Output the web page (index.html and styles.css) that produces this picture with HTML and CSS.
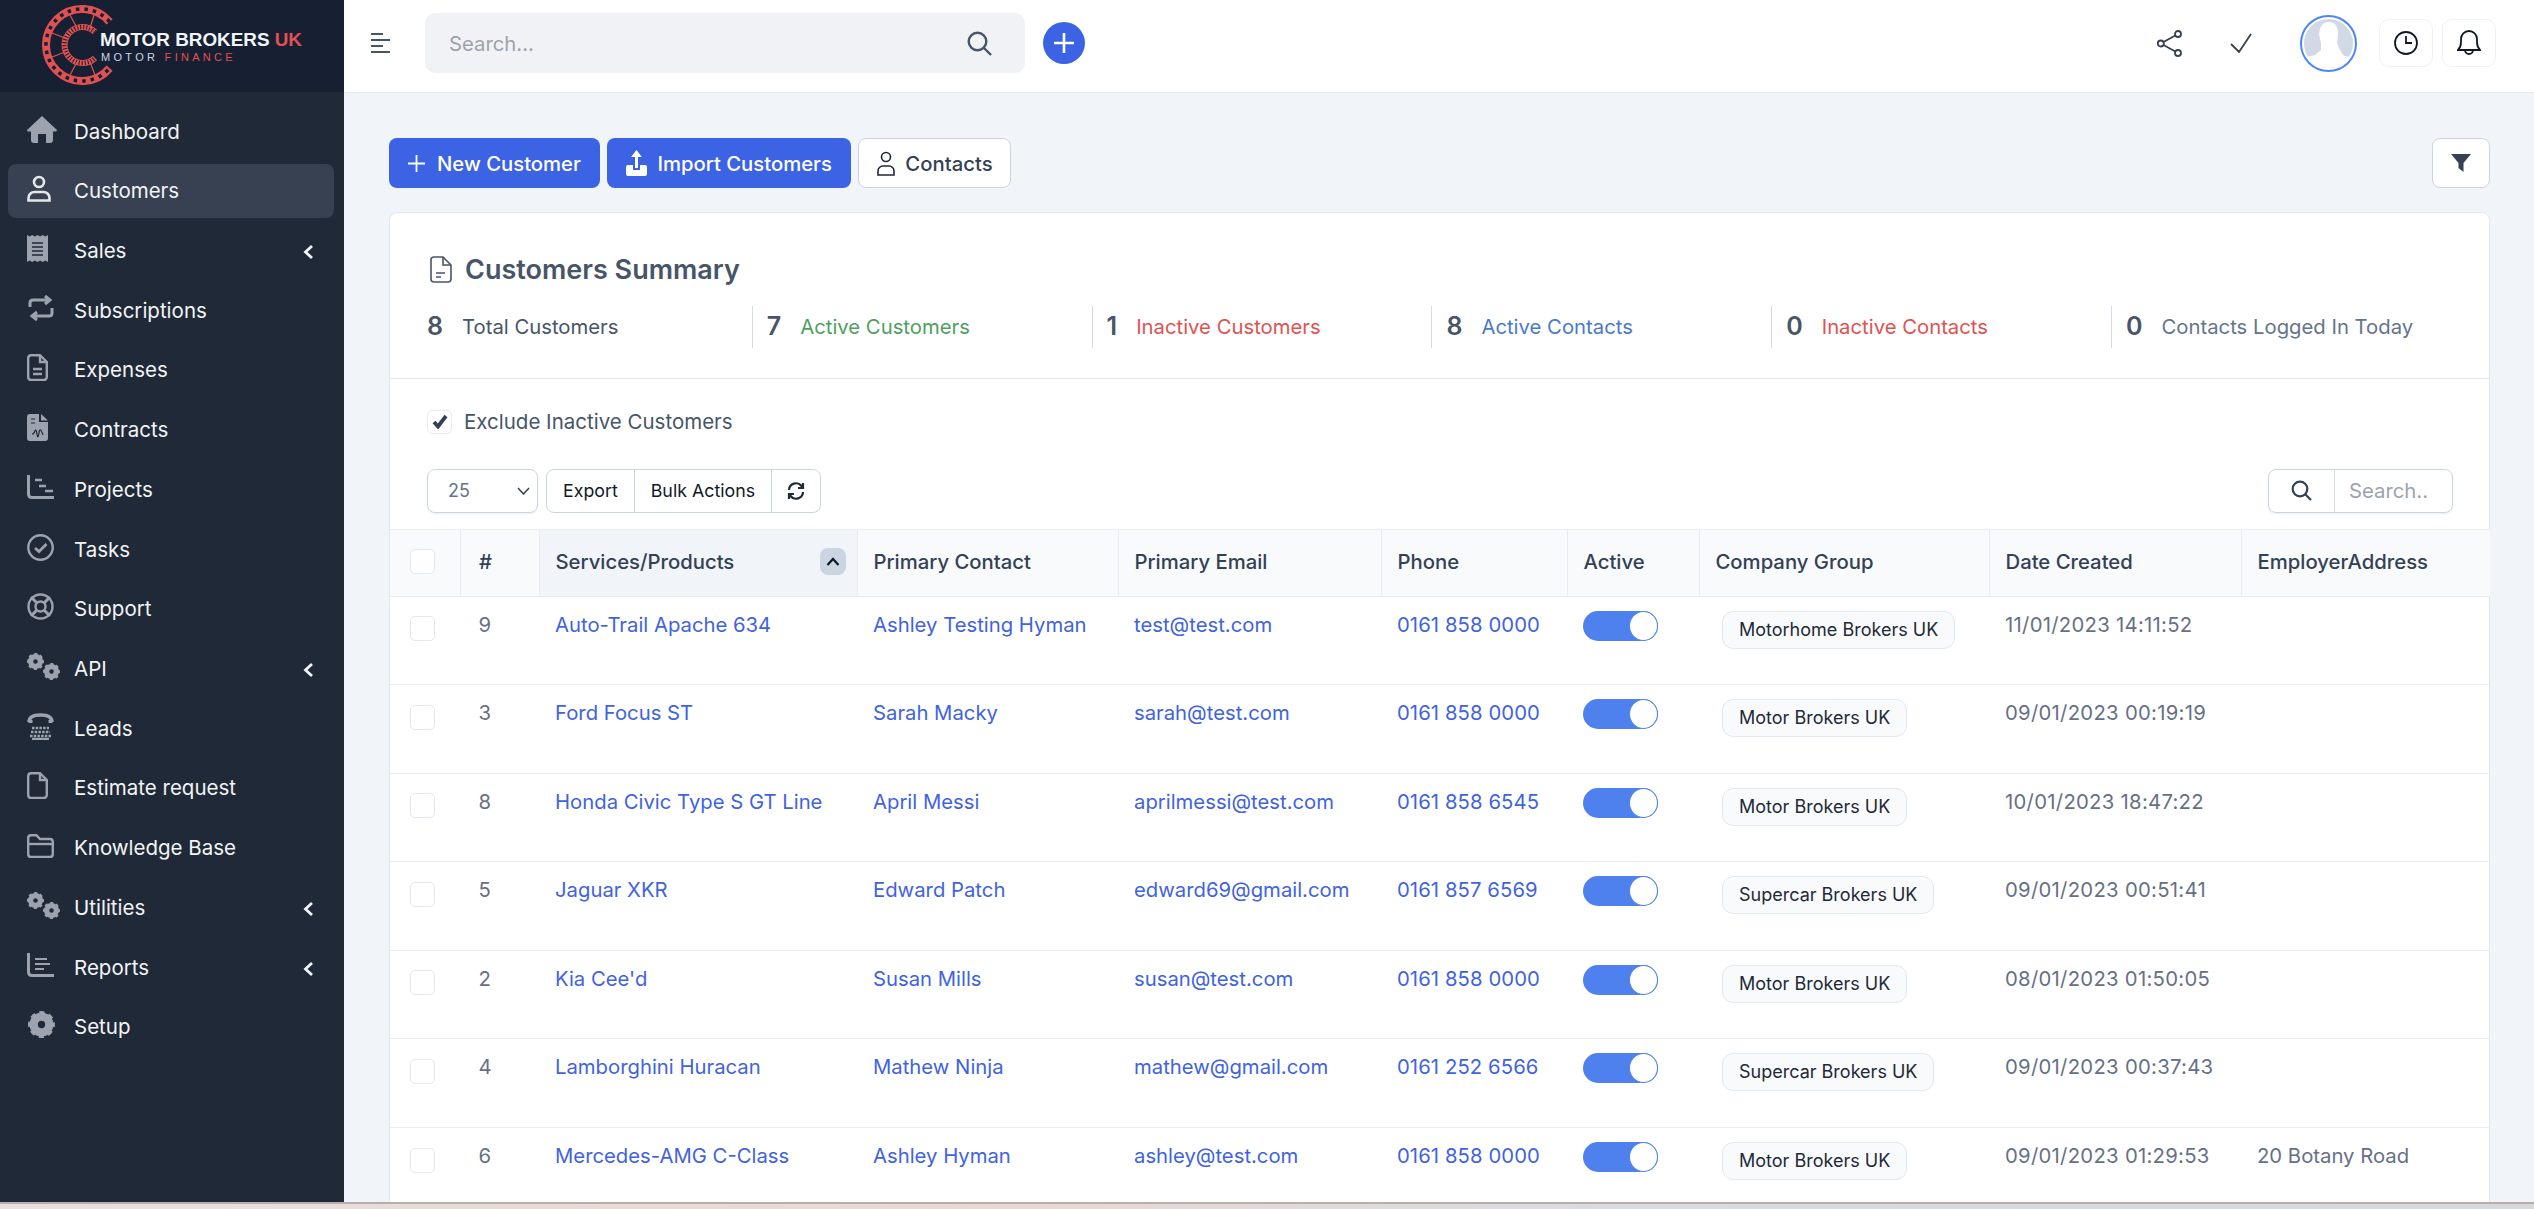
FILE: index.html
```html
<!DOCTYPE html>
<html lang="en">
<head>
<meta charset="utf-8">
<title>Customers</title>
<link rel="stylesheet" href="styles.css">
</head>
<body>
<svg class="sprite" aria-hidden="true">
  <symbol id="cog" viewBox="0 0 26 26">
    <circle cx="13" cy="13" r="7.500" fill="none" stroke="currentColor" stroke-width="8"/>
    <circle cx="13" cy="13" r="11" fill="none" stroke="currentColor" stroke-width="4" stroke-dasharray="4.640 4" stroke-dashoffset="2.300"/>
  </symbol>
</svg>
<div class="app">
  <aside class="sidebar">
    <div class="brand">
      <svg class="logo" width="344" height="92" viewBox="0 0 344 92">
        <g fill="none" stroke="#e05252" transform="translate(2 0)">
          <path d="M107.6 21.9A36 36 0 1 0 107.6 68.1" stroke-width="8"/>
          <path d="M107.6 21.9A36 36 0 1 0 107.6 68.1" stroke-width="3.500" stroke="#171f32" stroke-dasharray="3.500 5"/>
          <path d="M93 32A18 18 0 1 0 93 58" stroke-width="6"/>
          <path d="M93 32A18 18 0 1 0 93 58" stroke-width="4.500" stroke="#171f32" stroke-dasharray="1 2"/>
          <path d="M68 15L75 28M92 15L88 28M50 33L63 38M50 57L63 52M75 62L68 75M88 62L93 75" stroke-width="1.200"/>
        </g>
        <text class="logo-main" x="100" y="46" textLength="202" lengthAdjust="spacingAndGlyphs">MOTOR BROKERS <tspan class="logo-red">UK</tspan></text>
        <text class="logo-sub" x="101" y="61">MOTOR <tspan class="logo-red">FINANCE</tspan></text>
      </svg>
    </div>
    <nav class="menu">
      <a class="item"><span class="ico"><svg width="30" height="27" viewBox="0 0 30 27"><path fill="currentColor" d="M15 0L30 14Q30 15.500 28 15.500H26V24Q26 27 23 27H19V18H11V27H7Q4 27 4 24V15.500H2Q0 15.500 0 14Z"/></svg></span><span class="lbl">Dashboard</span></a>
      <a class="item active"><span class="ico"><svg width="24" height="27" viewBox="0 0 24 27" fill="none" stroke="currentColor" stroke-width="2.600"><circle cx="12" cy="7" r="5"/><path d="M1.500 25.500V23A6 6 0 0 1 7.500 17H16.500A6 6 0 0 1 22.500 23V25.500Z"/></svg></span><span class="lbl">Customers</span></a>
      <a class="item"><span class="ico"><svg width="21" height="27" viewBox="0 0 21 27"><path fill="currentColor" d="M0 0L2.600 1.500 5.200 0 7.800 1.500 10.500 0 13.100 1.500 15.700 0 18.300 1.500 21 0V27L18.300 25.500 15.700 27 13.100 25.500 10.500 27 7.800 25.500 5.200 27 2.600 25.500 0 27Z"/><path stroke="#1f2937" stroke-width="1.500" d="M5 8H16M5 12H16M5 16H16M5 20H16"/></svg></span><span class="lbl">Sales</span><svg class="chev" width="11" height="16" viewBox="0 0 11 16"><path d="M9 2L2.500 8 9 14" fill="none" stroke="currentColor" stroke-width="2.800"/></svg></a>
      <a class="item"><span class="ico"><svg width="28" height="26" viewBox="0 0 28 26" fill="none" stroke="currentColor" stroke-width="3"><path d="M3 12V8Q3 5 6 5H22M18 1L23 5 18 9"/><path d="M25 13V18Q25 21 22 21H6M10 17L5 21 10 25"/></svg></span><span class="lbl">Subscriptions</span></a>
      <a class="item"><span class="ico"><svg width="21" height="27" viewBox="0 0 21 27" fill="none" stroke="currentColor" stroke-width="2.400"><path d="M4 1.200H13L19.800 8V23A3 3 0 0 1 16.800 26H4A3 3 0 0 1 1.200 23V4A3 3 0 0 1 4 1.200Z"/><path d="M13 1.200V8H19.800M6 15H15M6 20H15"/></svg></span><span class="lbl">Expenses</span></a>
      <a class="item"><span class="ico"><svg width="21" height="27" viewBox="0 0 21 27"><path fill="currentColor" d="M3 0H12V8H21V24A3 3 0 0 1 18 27H3A3 3 0 0 1 0 24V3A3 3 0 0 1 3 0ZM14 0L21 6.500H14Z"/><path fill="none" stroke="#1f2937" stroke-width="1.200" d="M5 20Q7 20 8 17T10 20 12 19 16 21M4 5H8M4 9H8"/></svg></span><span class="lbl">Contracts</span></a>
      <a class="item"><span class="ico"><svg width="27" height="24" viewBox="0 0 27 24" fill="none" stroke="currentColor"><path stroke-width="3" d="M1.500 0V19Q1.500 22.500 5 22.500H27"/><path stroke-width="2.600" d="M8 5H15M12 11H19M18 16H26"/></svg></span><span class="lbl">Projects</span></a>
      <a class="item"><span class="ico"><svg width="27" height="27" viewBox="0 0 27 27" fill="none" stroke="currentColor" stroke-width="2.400"><circle cx="13.500" cy="13.500" r="12.200"/><path stroke-width="2.800" d="M8 14L12 17.500 19.500 10"/></svg></span><span class="lbl">Tasks</span></a>
      <a class="item"><span class="ico"><svg width="27" height="27" viewBox="0 0 27 27" fill="none" stroke="currentColor" stroke-width="2.400"><circle cx="13.500" cy="13.500" r="12"/><circle cx="13.500" cy="13.500" r="5"/><path stroke-width="3" d="M4 4L9.500 9.500M23 4L17.500 9.500M4 23L9.500 17.500M23 23L17.500 17.500"/></svg></span><span class="lbl">Support</span></a>
      <a class="item"><span class="ico"><svg width="33" height="27" viewBox="0 0 33 27"><use href="#cog" x="0" y="0" width="17" height="17"/><use href="#cog" x="16" y="10" width="17" height="17"/></svg></span><span class="lbl">API</span><svg class="chev" width="11" height="16" viewBox="0 0 11 16"><path d="M9 2L2.500 8 9 14" fill="none" stroke="currentColor" stroke-width="2.800"/></svg></a>
      <a class="item"><span class="ico"><svg width="27" height="27" viewBox="0 0 27 27" fill="none" stroke="currentColor"><path stroke-width="3.500" d="M2 9Q2 2 13.500 2T25 9"/><path stroke-width="4" d="M3.500 7V10M23.500 7V10"/><path stroke-width="2.400" stroke-dasharray="2.500 1.200" d="M5 15H22M4 19H23M3 23H24"/><path stroke-width="2.500" d="M5 26H22"/></svg></span><span class="lbl">Leads</span></a>
      <a class="item"><span class="ico"><svg width="21" height="27" viewBox="0 0 21 27" fill="none" stroke="currentColor" stroke-width="2.400"><path d="M4 1.200H13L19.800 8V23A3 3 0 0 1 16.800 26H4A3 3 0 0 1 1.200 23V4A3 3 0 0 1 4 1.200Z"/><path d="M13 1.200V8H19.800"/></svg></span><span class="lbl">Estimate request</span></a>
      <a class="item"><span class="ico"><svg width="27" height="24" viewBox="0 0 27 24" fill="none" stroke="currentColor" stroke-width="2.400"><path d="M1.200 4Q1.200 1.200 4 1.200H9.500L13 5H23Q25.800 5 25.800 8V20Q25.800 23 23 23H4Q1.200 23 1.200 20Z"/><path d="M1.200 10H25.800"/></svg></span><span class="lbl">Knowledge Base</span></a>
      <a class="item"><span class="ico"><svg width="33" height="27" viewBox="0 0 33 27"><use href="#cog" x="0" y="0" width="17" height="17"/><use href="#cog" x="16" y="10" width="17" height="17"/></svg></span><span class="lbl">Utilities</span><svg class="chev" width="11" height="16" viewBox="0 0 11 16"><path d="M9 2L2.500 8 9 14" fill="none" stroke="currentColor" stroke-width="2.800"/></svg></a>
      <a class="item"><span class="ico"><svg width="27" height="24" viewBox="0 0 27 24" fill="none" stroke="currentColor"><path stroke-width="3" d="M1.500 0V19Q1.500 22.500 5 22.500H27"/><path stroke-width="2.200" d="M8 6H20M8 11H23M8 16H17"/></svg></span><span class="lbl">Reports</span><svg class="chev" width="11" height="16" viewBox="0 0 11 16"><path d="M9 2L2.500 8 9 14" fill="none" stroke="currentColor" stroke-width="2.800"/></svg></a>
      <a class="item"><span class="ico"><svg class="setup" width="27" height="27" viewBox="0 0 26 26"><use href="#cog"/></svg></span><span class="lbl">Setup</span></a>
    </nav>
  </aside>
  <div class="main">
    <header class="topbar">
      <div class="bars"><i class="bar-s"></i><i class="bar-l"></i><i class="bar-s"></i><i class="bar-l"></i></div>
      <div class="top-search">
        <span class="top-ph">Search...</span>
        <svg width="25" height="25" viewBox="0 0 25 25" fill="none" stroke="#475569" stroke-width="2.400"><circle cx="10.500" cy="10.500" r="8.800"/><path d="M17 17L24 24"/></svg>
      </div>
      <div class="round-plus"><svg width="22" height="22" viewBox="0 0 22 22"><path d="M11 1V21M1 11H21" stroke="#fff" stroke-width="2.600"/></svg></div>
      <div class="top-right">
        <svg class="share" width="25" height="27" viewBox="0 0 25 27" fill="none" stroke="#374151" stroke-width="1.800"><circle cx="3.800" cy="13.500" r="3"/><circle cx="21" cy="4" r="3"/><circle cx="21" cy="23" r="3"/><path d="M6.500 12L18.300 5.500M6.500 15L18.300 21.500"/></svg>
        <svg class="tick" width="22" height="20" viewBox="0 0 22 20" fill="none" stroke="#374151" stroke-width="1.800"><path d="M1 11L9 19 21 1"/></svg>
        <div class="avatar"><svg width="49" height="49" viewBox="0 0 49 49"><circle cx="24.500" cy="24.500" r="24.500" fill="#d1d8e6"/><path fill="#fff" d="M15 15Q16 3 25 3T34 15L33 24 36 31 40 37 47 38Q40 49 24.500 49T3 38L11 36 17 31 17 24Z"/></svg></div>
        <div class="icon-btn"><svg width="24" height="24" viewBox="0 0 24 24" fill="none" stroke="#111827" stroke-width="1.800"><circle cx="12" cy="12" r="11"/><path d="M12 5V12H18"/></svg></div>
        <div class="icon-btn"><svg width="24" height="26" viewBox="0 0 24 26" fill="none" stroke="#111827" stroke-width="1.800"><path d="M1 20Q4 17 4 12V9A8 8 0 0 1 20 9V12Q20 17 23 20Z"/><path d="M8 20A4 4 0 0 0 16 20"/></svg></div>
      </div>
    </header>
    <main class="content">
      <div class="actions">
        <div class="action-group">
          <a class="btn primary"><svg width="17" height="17" viewBox="0 0 17 17"><path d="M8.500 0V17M0 8.500H17" stroke="#fff" stroke-width="1.800"/></svg>New Customer</a>
          <a class="btn primary import"><svg width="21" height="26" viewBox="0 0 21 26"><path fill="#fff" d="M10.500 0L16 7H12V18H9V7H5ZM2 15H7V20H14V15H19Q21 15 21 17V24Q21 26 19 26H2Q0 26 0 24V17Q0 15 2 15Z"/></svg>Import Customers</a>
          <a class="btn plain"><svg width="18" height="25" viewBox="0 0 18 25" fill="none" stroke="#1f2937" stroke-width="1.600"><circle cx="9" cy="6" r="4.500"/><path d="M1 24V20A5 5 0 0 1 6 15H12A5 5 0 0 1 17 20V24Z"/></svg>Contacts</a>
        </div>
        <a class="filter-btn"><svg width="20" height="18" viewBox="0 0 20 18"><path fill="#374151" d="M0 0H20L12.500 9V18L7.500 14V9Z"/></svg></a>
      </div>
      <section class="card">
        <div class="summary">
          <h2 class="sum-title"><svg width="22" height="27" viewBox="0 0 22 27" fill="none" stroke="#475569" stroke-width="1.600"><path d="M4 1H13L21 9V23A3 3 0 0 1 18 26H4A3 3 0 0 1 1 23V4A3 3 0 0 1 4 1Z"/><path d="M13 1V9H21M6 17H15M6 21H11"/></svg>Customers Summary</h2>
          <div class="stats">
            <div class="stat"><b>8</b><span class="s-dark">Total Customers</span></div>
            <div class="stat"><b>7</b><span class="s-green">Active Customers</span></div>
            <div class="stat"><b>1</b><span class="s-red">Inactive Customers</span></div>
            <div class="stat"><b>8</b><span class="s-blue">Active Contacts</span></div>
            <div class="stat"><b>0</b><span class="s-red">Inactive Contacts</span></div>
            <div class="stat"><b>0</b><span class="s-grey">Contacts Logged In Today</span></div>
          </div>
        </div>
        <label class="exclude"><span class="check"><svg width="16" height="15" viewBox="0 0 16 15"><path d="M2 8L6 12.500 14 2" fill="none" stroke="#334155" stroke-width="3.800"/></svg></span>Exclude Inactive Customers</label>
        <div class="tools">
          <div class="select">25<svg width="13" height="8" viewBox="0 0 13 8"><path d="M1 1L6.500 7 12 1" fill="none" stroke="#334155" stroke-width="1.500"/></svg></div>
          <div class="btn-group">
            <span>Export</span><span>Bulk Actions</span><span class="refresh"><svg width="18" height="18" viewBox="0 0 18 18" fill="none" stroke="#1f2937" stroke-width="2.200"><path d="M2 8A7 7 0 0 1 14.500 4L16 6M16 1V6H11"/><path d="M16 10A7 7 0 0 1 3.500 14L2 12M2 17V12H7"/></svg></span>
          </div>
          <div class="dt-search">
            <span class="dt-ico"><svg width="21" height="21" viewBox="0 0 21 21" fill="none" stroke="#334155" stroke-width="2.200"><circle cx="9" cy="9" r="7.300"/><path d="M14.500 14.500L20 20"/></svg></span>
            <span class="dt-ph">Search..</span>
          </div>
        </div>
        <table class="grid">
          <colgroup><col class="c1"><col class="c2"><col class="c3"><col class="c4"><col class="c5"><col class="c6"><col class="c7"><col class="c8"><col class="c9"><col class="c10"></colgroup>
          <thead>
            <tr>
              <th><span class="box"></span></th><th class="num">#</th>
              <th class="sorted"><div class="th-flex">Services/Products<span class="sort"><svg width="14" height="9" viewBox="0 0 14 9"><path d="M1.500 8L7 2 12.500 8" fill="none" stroke="#0f172a" stroke-width="2.200"/></svg></span></div></th>
              <th>Primary Contact</th><th>Primary Email</th><th>Phone</th><th>Active</th><th>Company Group</th><th>Date Created</th><th>EmployerAddress</th>
            </tr>
          </thead>
          <tbody>
            <tr><td><span class="box"></span></td><td class="num">9</td><td><a>Auto-Trail Apache 634</a></td><td><a>Ashley Testing Hyman</a></td><td><a>test@test.com</a></td><td class="phone"><a>0161 858 0000</a></td><td><span class="toggle"><i></i></span></td><td><span class="pill">Motorhome Brokers UK</span></td><td class="date">11/01/2023 14:11:52</td><td></td></tr>
            <tr><td><span class="box"></span></td><td class="num">3</td><td><a>Ford Focus ST</a></td><td><a>Sarah Macky</a></td><td><a>sarah@test.com</a></td><td class="phone"><a>0161 858 0000</a></td><td><span class="toggle"><i></i></span></td><td><span class="pill">Motor Brokers UK</span></td><td class="date">09/01/2023 00:19:19</td><td></td></tr>
            <tr><td><span class="box"></span></td><td class="num">8</td><td><a>Honda Civic Type S GT Line</a></td><td><a>April Messi</a></td><td><a>aprilmessi@test.com</a></td><td class="phone"><a>0161 858 6545</a></td><td><span class="toggle"><i></i></span></td><td><span class="pill">Motor Brokers UK</span></td><td class="date">10/01/2023 18:47:22</td><td></td></tr>
            <tr><td><span class="box"></span></td><td class="num">5</td><td><a>Jaguar XKR</a></td><td><a>Edward Patch</a></td><td><a>edward69@gmail.com</a></td><td class="phone"><a>0161 857 6569</a></td><td><span class="toggle"><i></i></span></td><td><span class="pill">Supercar Brokers UK</span></td><td class="date">09/01/2023 00:51:41</td><td></td></tr>
            <tr><td><span class="box"></span></td><td class="num">2</td><td><a>Kia Cee'd</a></td><td><a>Susan Mills</a></td><td><a>susan@test.com</a></td><td class="phone"><a>0161 858 0000</a></td><td><span class="toggle"><i></i></span></td><td><span class="pill">Motor Brokers UK</span></td><td class="date">08/01/2023 01:50:05</td><td></td></tr>
            <tr><td><span class="box"></span></td><td class="num">4</td><td><a>Lamborghini Huracan</a></td><td><a>Mathew Ninja</a></td><td><a>mathew@gmail.com</a></td><td class="phone"><a>0161 252 6566</a></td><td><span class="toggle"><i></i></span></td><td><span class="pill">Supercar Brokers UK</span></td><td class="date">09/01/2023 00:37:43</td><td></td></tr>
            <tr><td><span class="box"></span></td><td class="num">6</td><td><a>Mercedes-AMG C-Class</a></td><td><a>Ashley Hyman</a></td><td><a>ashley@test.com</a></td><td class="phone"><a>0161 858 0000</a></td><td><span class="toggle"><i></i></span></td><td><span class="pill">Motor Brokers UK</span></td><td class="date">09/01/2023 01:29:53</td><td>20 Botany Road</td></tr>
          </tbody>
        </table>
      </section>
    </main>
  </div>
</div>
<div class="strip"></div>
</body>
</html>
```
FILE: styles.css
```css
* { box-sizing: border-box; }
html, body { margin: 0; height: 1209px; overflow: hidden; }
body { font-family: Inter, "Liberation Sans", sans-serif; font-size: 20.300px; color: #475569; background: #e8dad5; }
.sprite { display: none; }
.app { display: flex; height: 1202px; }
.strip { height: 7px; border-top: 2px solid #b9acaa; background: linear-gradient(90deg, #e6e1dc, #e8d8d3 40%, #d8dbe2 65%, #d5d8dc); }

.sidebar { width: 344px; flex: none; background: #1f2937; }
.brand { height: 92px; background: #171f32; }
.logo { display: block; }
.logo-main { font: 700 17.500px "Liberation Sans", Inter, sans-serif; fill: #f1f5f9; }
.logo-sub { font: 400 11px "Liberation Sans", Inter, sans-serif; fill: #cbd5e1; letter-spacing: 3.300px; }
.logo-red { fill: #e05252; }
.menu { display: flex; flex-direction: column; gap: 5.730px; padding: 12px 10px 0 8px; }
.item { display: flex; align-items: center; height: 54px; padding: 0 20px 0 19px; border-radius: 8px; color: #f3f4f6; }
.item.active { background: #374151; }
.item.active .ico { color: #e5e7eb; }
.ico { width: 47px; flex: none; display: flex; align-items: center; color: #9ca3af; margin-top: -4px; }
.ico svg { display: block; }
.setup { margin-left: 1px; }
.lbl { flex: 1; font-size: 20.500px; }
.chev { color: #f3f4f6; margin-top: 4px; }

.main { flex: 1; min-width: 0; display: flex; flex-direction: column; background: #f1f5f9; overflow: hidden; }
.topbar { height: 93px; flex: none; display: flex; align-items: center; background: #fff; border-bottom: 1.500px solid #e2e8f0; padding: 0 38px 6px 27px; }
.bars { display: flex; flex-direction: column; gap: 3.600px; width: 19px; }
.bars i { display: block; height: 2.200px; background: #475569; }
.bar-s { width: 12px; }
.bar-l { width: 19px; }
.top-search { width: 600px; height: 60px; margin-left: 35px; padding: 0 33px 0 24px; display: flex; align-items: center; justify-content: space-between; background: #f1f2f6; border-radius: 10px; }
.top-ph { color: #9ca3af; }
.round-plus { width: 42px; height: 42px; margin-left: 18px; border-radius: 50%; background: #3b63e3; display: flex; align-items: center; justify-content: center; }
.top-right { margin-left: auto; display: flex; align-items: center; }
.share { margin-right: 48px; }
.tick { margin-right: 48px; }
.avatar { width: 57px; height: 57px; border: 2px solid #4f86f7; border-radius: 50%; padding: 2px; margin-right: 22px; }
.avatar svg { display: block; }
.icon-btn { width: 54px; height: 48px; border: 1px solid #eef1f6; border-radius: 10px; margin-left: 9px; display: flex; align-items: center; justify-content: center; }
.avatar + .icon-btn { margin-left: 0; }

.content { padding: 45px 44px 0 45px; }
.actions { display: flex; justify-content: space-between; height: 50px; margin-bottom: 24px; }
.action-group { display: flex; gap: 7.500px; }
.btn { display: flex; align-items: center; gap: 12px; height: 50px; padding: 0 19px; border-radius: 8px; font-weight: 500; }
.btn.primary { background: #3b63e3; color: #fff; }
.btn.import { gap: 10px; }
.btn.plain { background: #fff; border: 1px solid #cbd5e1; color: #334155; padding: 0 17px 0 18px; gap: 10px; }
.filter-btn { width: 58px; height: 50px; background: #fff; border: 1px solid #cbd5e1; border-radius: 8px; display: flex; align-items: center; justify-content: center; }

.card { background: #fff; border: 1px solid #e2e8f0; border-radius: 8px 8px 0 0; }
.summary { padding: 37px 0 30px 22px; border-bottom: 1.500px solid #e2e8f0; }
.sum-title { margin: 0 0 16px; height: 39px; display: flex; align-items: center; gap: 13px; font-size: 27px; font-weight: 600; color: #475569; padding-left: 18px; }
.stats { display: flex; padding-top: 0.500px; }
.stat { width: 339.800px; height: 42px; padding: 0 0 1px 14px; display: flex; align-items: center; border-left: 1px solid #d5dbe4; font-size: 20.300px; }
.stat:first-child { border-left-color: transparent; }
.stat b { margin-right: 19px; font-size: 25px; font-weight: 600; color: #475569; }
.s-dark { color: #475569; }
.s-green { color: #4f9f5f; }
.s-red { color: #e05252; }
.s-blue { color: #4b79c9; }
.s-grey { color: #64748b; }

.exclude { display: flex; align-items: center; gap: 12px; margin: 31px 0 0 37px; height: 24px; font-size: 20.500px; color: #475569; }
.check { width: 25px; height: 24px; border: 1px solid #e5e9f0; border-radius: 5px; display: flex; align-items: center; justify-content: center; }
.tools { display: flex; margin: 35px 36px 16px 37px; height: 44px; }
.select { width: 111px; height: 44px; border: 1px solid #cbd5e1; border-radius: 8px; box-shadow: 0 1px 2px rgba(0,0,0,.08); display: flex; align-items: center; justify-content: space-between; padding: 0 7px 0 20px; font-size: 18px; color: #64748b; }
.btn-group { margin-left: 8px; display: flex; height: 44px; border: 1px solid #cbd5e1; border-radius: 8px; font-size: 17.800px; font-weight: 400; color: #111827; }
.btn-group span { display: flex; align-items: center; padding: 0 16px; border-left: 1px solid #cbd5e1; }
.btn-group span:first-child { border-left: 0; }
.btn-group .refresh { padding: 0 15px; }
.dt-search { margin-left: auto; width: 185px; height: 44px; display: flex; border: 1px solid #cbd5e1; border-radius: 8px; box-shadow: 0 1px 2px rgba(0,0,0,.08); }
.dt-ico { width: 66px; display: flex; align-items: center; justify-content: center; border-right: 1px solid #d5dbe4; }
.dt-ph { padding-left: 14px; display: flex; align-items: center; color: #9ca3af; }

.grid { width: 2100px; table-layout: fixed; border-collapse: collapse; }
.c1 { width: 70.500px; } .c2 { width: 78.500px; } .c3 { width: 318px; } .c4 { width: 261px; } .c5 { width: 263px; }
.c6 { width: 186px; } .c7 { width: 132px; } .c8 { width: 290px; } .c9 { width: 252px; } .c10 { width: 249px; }
.grid th { height: 67px; padding: 0 16px 3px; text-align: left; font-weight: 500; color: #334155; background: #f8fafc; border: 1px solid #e8edf3; border-width: 1.500px 0 1.500px 1px; }
.grid th:first-child { border-left: 0; padding-left: 17px; }
.grid th.sorted { background: #f1f5f9; padding-right: 11px; }
.grid .num { padding-left: 18px; }
.th-flex { display: flex; align-items: center; justify-content: space-between; }
.sort { width: 26px; height: 27px; background: #cbd5e1; border-radius: 8px; display: flex; align-items: center; justify-content: center; }
.grid tbody tr { height: 88.600px; }
.grid td { padding: 14px 16px 0; vertical-align: top; line-height: 28px; color: #667085; border-bottom: 1px solid #e8edf3; }
.grid td:first-child { padding-left: 17px; }
.grid .phone { letter-spacing: 0.080px; }
.grid .date { letter-spacing: 0.280px; }
.grid a { color: #3f63e0; white-space: nowrap; }
.box { display: block; width: 25px; height: 25px; border: 1px solid #e2e8f0; border-radius: 5px; background: #fff; margin-left: 3px; }
.grid td .box { margin-top: 5.500px; }
.toggle { display: flex; justify-content: flex-end; width: 75px; height: 30px; background: #4f81ee; border-radius: 15px; }
.toggle i { display: block; width: 29px; height: 30px; background: #fff; border: 1px solid #4f81ee; border-radius: 50%; }
.pill { display: inline-block; height: 38px; line-height: 36px; margin-left: 7px; padding: 0 16px; font-size: 18px; color: #1f2937; background: #f8fafc; border: 1px solid #e2e8f0; border-radius: 11px; white-space: nowrap; }
```
